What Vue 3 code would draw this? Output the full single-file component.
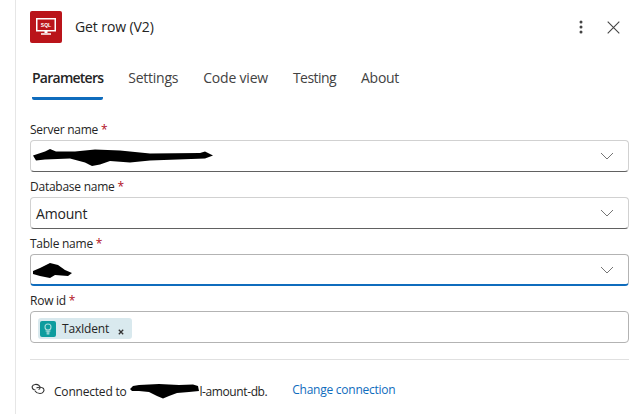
<script setup>
const tabs = [
  { label: 'Parameters', cls: 'on' },
  { label: 'Settings', cls: 'settings' },
  { label: 'Code view', cls: 'code' },
  { label: 'Testing', cls: 'testing' },
  { label: 'About', cls: '' },
]
</script>

<template>
  <div class="page">
    <main class="panel">
      <header class="head">
        <div class="logo">
          <svg width="22" height="20" viewBox="0 0 22 20">
            <path fill="#fff" fill-rule="evenodd" d="M1 1h20v13.500H1zM2.500 2.500v10.500h17V2.500zM9.500 14.500h3v2h-3zM6 16.300h10v1.400H6z"/>
            <text x="11" y="10" text-anchor="middle" class="sql">SQL</text>
          </svg>
        </div>
        <h1 class="title">Get row (V2)</h1>
        <div class="actions">
          <svg width="4" height="14" viewBox="0 0 4 14"><circle cx="2" cy="2" r="1.500"/><circle cx="2" cy="7" r="1.500"/><circle cx="2" cy="12" r="1.500"/></svg>
          <svg width="13" height="13" viewBox="0 0 13 13"><path d="M.7.7l11.600 11.600M12.300.7L.7 12.300" stroke="#444" stroke-width="1.100" fill="none"/></svg>
        </div>
      </header>

      <nav class="tabs">
        <div v-for="t in tabs" :key="t.label" class="tab" :class="t.cls">{{ t.label }}</div>
      </nav>

      <section class="form">
        <div class="field">
          <label>Server name <b>*</b></label>
          <div class="box select dark">
            <svg class="blot" width="184" height="24" viewBox="0 0 184 24"><path d="M2 11.500 14 7.500 19 5 25 7.500 44 7.500 64 5.500 89 6.500 119 9.500 169 9 174 7.500 182 11.500 174 14.500 119 16.500 99 18.500 79 17 69 20.500 61 22 54 18.500 39 14.500 14 15.500 5 16.500z"/></svg>
            <svg class="chev" width="14" height="8" viewBox="0 0 14 8"><path d="M1 1l6 6 6-6" /></svg>
          </div>
        </div>
        <div class="field">
          <label>Database name <b>*</b></label>
          <div class="box select dark">
            <span class="val">Amount</span>
            <svg class="chev" width="14" height="8" viewBox="0 0 14 8"><path d="M1 1l6 6 6-6" /></svg>
          </div>
        </div>
        <div class="field">
          <label>Table name <b>*</b></label>
          <div class="box select blue">
            <svg class="blot" width="42" height="20" viewBox="0 0 42 20"><path d="M2 11 9 8 19 3 27 5 34 10 41 13 37 16 24 15 19 18 9 16 2 14z"/></svg>
            <svg class="chev" width="14" height="8" viewBox="0 0 14 8"><path d="M1 1l6 6 6-6" /></svg>
          </div>
        </div>
        <div class="field">
          <label>Row id <b>*</b></label>
          <div class="box tags">
            <span class="tag">
              <span class="tag-icon">
                <svg width="10" height="12" viewBox="0 0 10 12" fill="none" stroke="#a9dcdc" stroke-width="1.100"><circle cx="5" cy="4" r="3"/><path d="M2.500 8h5M4.200 8v3h1.600V8"/></svg>
              </span>
              <span class="tag-text">TaxIdent</span>
              <svg class="tag-x" width="6" height="6" viewBox="0 0 6 6"><path d="M.8.8l4.400 4.400M5.200.8L.8 5.200" stroke="#333" stroke-width="1.300"/></svg>
            </span>
          </div>
        </div>
      </section>

      <footer class="conn">
        <svg class="link-ic" width="15" height="12" viewBox="0 0 15 12" fill="none" stroke="#333" stroke-width="1.100"><path d="M8 2.500C6 .8 2 1 1.200 3.500.8 5.500 2.500 7 4.500 7"/><path d="M5.500 5C7 4 11 4 12.500 5.500 14 7.500 12 10.500 9 10.500 7 10.500 5 9.500 4 8"/><path d="M8 2.500C9.500 3.500 9.500 6 7.500 6.500"/></svg>
        <span class="conn-text">Connected to <svg class="blot2" width="70" height="16" viewBox="0 0 70 16"><path d="M1 6 4 3 10 2 30 1 50 2 64 1.500 69 3 70 8 60 9 48 10 40 13 34 15.500 28 13 20 9 10 8 3 8z"/></svg><span class="tail">l-amount-db.</span></span>
        <span class="change">Change connection</span>
      </footer>
    </main>
  </div>
</template>

<style scoped>
.page {
  width: 640px;
  height: 414px;
  overflow: hidden;
  background: #fff;
  font-family: "Open Sans", "Noto Sans", sans-serif;
  color: #242424;
}
.panel {
  margin-left: 15px;
  height: 414px;
  box-sizing: border-box;
  border-left: 1px solid #e6e6e6;
  padding: 11px 10px 0 14px;
}
.head {
  display: flex;
  align-items: center;
  height: 32px;
}
.logo {
  width: 32px;
  height: 32px;
  border-radius: 2px;
  background: #ba141a;
  display: flex;
  align-items: center;
  justify-content: center;
}
.sql {
  font-size: 5px;
  font-weight: 700;
  fill: #fff;
  font-family: "Liberation Sans", sans-serif;
}
.title {
  margin: 0 0 0 13px;
  font-size: 14px;
  font-weight: 500;
  line-height: 20px;
  flex: 1;
  letter-spacing: -0.1px;
}
.actions {
  display: flex;
  align-items: center;
  gap: 24px;
  margin-right: 10px;
}
.actions circle { fill: #444; }
.tabs {
  display: flex;
  margin-top: 23px;
  margin-left: 2px;
  gap: 25px;
  height: 34px;
}
.tab {
  font-size: 14px;
  line-height: 24px;
  color: #424242;
  letter-spacing: -0.3px;
  height: 34px;
  box-sizing: border-box;
}
.tab.settings { letter-spacing: -0.25px; }
.tab.code { letter-spacing: -0.2px; }
.tab.testing { letter-spacing: -0.55px; }
.tab.on {
  font-weight: 600;
  color: #242424;
  border-bottom: 3px solid #0f6cbd;
  border-radius: 0 0 2px 2px;
  letter-spacing: -0.75px;
}
.form {
  margin-top: 21px;
  display: flex;
  flex-direction: column;
  gap: 6px;
  padding-bottom: 16px;
  border-bottom: 1px solid #e0e0e0;
  width: 599px;
}
.field label {
  display: block;
  font-size: 12px;
  line-height: 18px;
  font-weight: 500;
  color: #242424;
  letter-spacing: -0.25px;
  margin-bottom: 1px;
}
.field b {
  font-weight: 400;
  color: #b10e1c;
}
.box {
  height: 32px;
  box-sizing: border-box;
  border: 1px solid #d1d1d1;
  border-radius: 4px;
  display: flex;
  align-items: center;
  position: relative;
}
.select { padding: 0 14px 0 5px; }
.dark { border-bottom-color: #616161; }
.blue {
  border-color: #b3b3b3;
  border-bottom: 2px solid #0f6cbd;
}
.tags {
  border-color: #b3b3b3;
  padding-left: 7px;
  padding-top: 3px;
}
.val {
  font-size: 14px;
  letter-spacing: -0.2px;
}
.blot {
  flex: none;
  margin-left: -5px;
}
.blot path, .blot2 path { fill: #000; }
.chev {
  margin-left: auto;
}
.chev path {
  fill: none;
  stroke: #757575;
  stroke-width: 1;
}
.tag {
  display: flex;
  align-items: center;
  height: 21px;
  width: 94px;
  padding-left: 2px;
  box-sizing: border-box;
  background: #d9e9ee;
  border-radius: 3px;
}
.tag-icon {
  width: 16px;
  height: 16px;
  border-radius: 2px;
  background: #0d9c9e;
  display: flex;
  align-items: center;
  justify-content: center;
}
.tag-text {
  margin-left: 6px;
  font-size: 12px;
  font-weight: 500;
  letter-spacing: -0.2px;
}
.tag-x { margin-left: 9px; margin-top: 6px; }
.conn {
  display: flex;
  align-items: center;
  margin-top: 21px;
  height: 20px;
}
.link-ic { margin-left: 1px; margin-top: -5px; }
.conn-text {
  margin-left: 8px;
  font-size: 12px;
  font-weight: 500;
  letter-spacing: -0.2px;
  display: flex;
  align-items: center;
  white-space: pre;
}
.tail { letter-spacing: -0.4px; }
.change {
  margin-left: 25px;
  margin-top: -3px;
  font-size: 12px;
  color: #0f6cbd;
  letter-spacing: -0.25px;
}
</style>
